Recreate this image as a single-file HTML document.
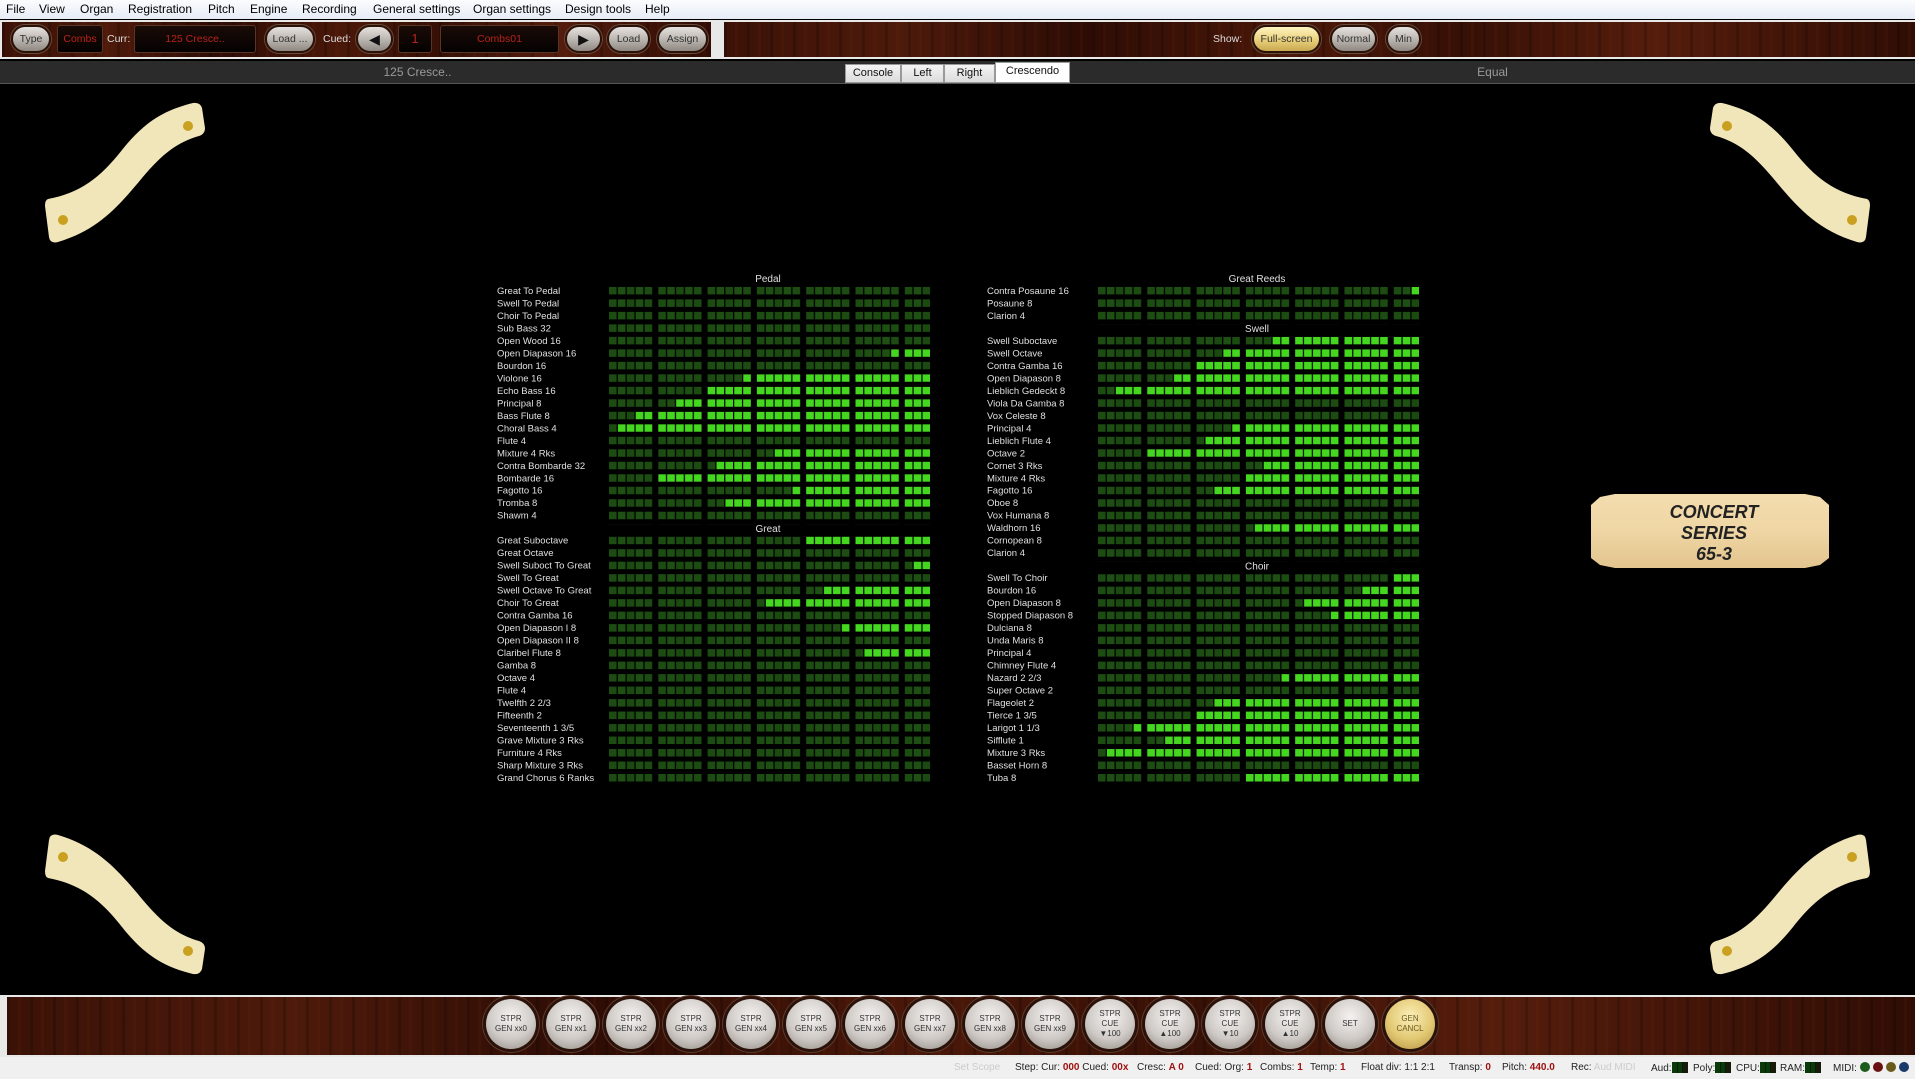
<!DOCTYPE html>
<html><head><meta charset="utf-8">
<style>
*{margin:0;padding:0;box-sizing:border-box}
body{width:1915px;height:1079px;background:#000;position:relative;overflow:hidden;font-family:"Liberation Sans",Arial,sans-serif}
.abs{position:absolute}
#menu{left:0;top:0;width:1915px;height:19px;background:linear-gradient(#fbfcfe,#e6ecf6);font-size:12px;color:#000}
#menu span{position:absolute;top:2px}
.wood{background:
 repeating-linear-gradient(90deg,rgba(0,0,0,.18) 0 3px,rgba(0,0,0,0) 3px 11px,rgba(120,40,10,.12) 11px 14px,rgba(0,0,0,0) 14px 23px),
 linear-gradient(90deg,#3b1207,#4d1a0b 15%,#2d0c05 30%,#4a1809 48%,#361006 62%,#551d0c 78%,#2f0d05)}
#tb{left:0;top:20px;width:1915px;height:39px;background:#e8e8e8}
.btn{position:absolute;height:28px;border-radius:14px;background:linear-gradient(#e6e2df,#b9b3ae 55%,#8f8781);border:2px solid #2a1208;box-shadow:0 0 0 1px #6b4a3a;font-size:10.5px;color:#333;text-align:center;line-height:24px}
.disp{position:absolute;height:28px;background:linear-gradient(#1a0b07,#050202);border:1px solid #5a3424;border-radius:3px;color:#b8231b;font-size:10.5px;text-align:center;line-height:26px}
.lbl{position:absolute;color:#ddd;font-size:10.5px}
#tabs{left:0;top:61px;width:1915px;height:23px;background:#2b2b2b;border-bottom:1px solid #555}
.tab{position:absolute;top:3px;height:19px;background:linear-gradient(#f4f4f4,#dcdcdc);border:1px solid #999;font-size:11px;color:#111;text-align:center;line-height:17px}
#bot{left:0;top:995px;width:1915px;height:62px;background:#e8e8e8}
.cb{position:absolute;top:4px;width:50px;height:50px;border-radius:50%;background:radial-gradient(circle at 50% 35%,#f4f2f0,#cfcac6 55%,#8e8781);box-shadow:0 0 0 3px #2a120a,0 0 0 4px #5e3a2a;font-size:8px;color:#333;text-align:center;display:flex;align-items:center;justify-content:center;line-height:10px}
#status{left:0;top:1057px;width:1915px;height:22px;background:#f0f0f0;font-size:10px;color:#222}
#status span{position:absolute;top:5px;white-space:nowrap}
.r{color:#a01010}
.meter{display:inline-block;width:16px;height:11px;vertical-align:-2px;background:linear-gradient(90deg,#0a3a0a 0 30%,#000 30% 35%,#0a3a0a 35% 65%,#000 65% 70%,#1a1a0a 70%)}
.dot{display:inline-block;width:10px;height:10px;border-radius:50%;vertical-align:-1px;margin-left:3px}
</style></head><body>

<div id="menu" class="abs">
<span style="left:6px">File</span><span style="left:39px">View</span><span style="left:80px">Organ</span><span style="left:128px">Registration</span><span style="left:208px">Pitch</span><span style="left:250px">Engine</span><span style="left:302px">Recording</span><span style="left:373px">General settings</span><span style="left:473px">Organ settings</span><span style="left:565px">Design tools</span><span style="left:645px">Help</span>
</div>

<div id="tb" class="abs">
 <div class="abs wood" style="left:2px;top:2px;width:709px;height:35px"></div>
 <div class="abs wood" style="left:724px;top:2px;width:1191px;height:35px"></div>
 <div class="btn" style="left:11px;top:5px;width:40px">Type</div>
 <div class="disp" style="left:57px;top:5px;width:46px">Combs</div>
 <div class="lbl" style="left:107px;top:13px">Curr:</div>
 <div class="disp" style="left:134px;top:5px;width:122px">125 Cresce..</div>
 <div class="btn" style="left:265px;top:5px;width:50px">Load ...</div>
 <div class="lbl" style="left:323px;top:13px">Cued:</div>
 <div class="btn" style="left:356px;top:5px;width:37px;font-size:14px;color:#111">&#9664;</div>
 <div class="disp" style="left:398px;top:5px;width:34px;font-size:13px">1</div>
 <div class="disp" style="left:440px;top:5px;width:119px">Combs01</div>
 <div class="btn" style="left:565px;top:5px;width:37px;font-size:14px;color:#111">&#9654;</div>
 <div class="btn" style="left:607px;top:5px;width:43px">Load</div>
 <div class="btn" style="left:657px;top:5px;width:51px">Assign</div>
 <div class="lbl" style="left:1213px;top:13px">Show:</div>
 <div class="btn" style="left:1252px;top:5px;width:69px;background:linear-gradient(#fff4c0,#e8cf7a 55%,#c9a850)">Full-screen</div>
 <div class="btn" style="left:1330px;top:5px;width:47px">Normal</div>
 <div class="btn" style="left:1386px;top:5px;width:35px">Min</div>
</div>

<div id="tabs" class="abs">
 <div class="abs" style="left:0;width:835px;top:4px;text-align:center;color:#9a9a9a;font-size:12px">125 Cresce..</div>
 <div class="abs" style="left:1070px;width:845px;top:4px;text-align:center;color:#9a9a9a;font-size:12px">Equal</div>
 <div class="tab" style="left:845px;width:56px">Console</div>
 <div class="tab" style="left:901px;width:43px">Left</div>
 <div class="tab" style="left:944px;width:51px">Right</div>
 <div class="tab" style="left:995px;width:75px;background:#fff;top:1px;height:21px">Crescendo</div>
</div>

<svg class="abs" style="left:0;top:0" width="1915" height="1079" viewBox="0 0 1915 1079">
<defs>
 <pattern id="un" patternUnits="userSpaceOnUse" x="609" y="286.9" width="49.3" height="12.49">
  <rect x="0" y="0" width="7.6" height="7.5" fill="#1c4c12"/><rect x="8.9" y="0" width="7.6" height="7.5" fill="#1e5013"/><rect x="17.8" y="0" width="7.6" height="7.5" fill="#1b4a11"/><rect x="26.7" y="0" width="7.6" height="7.5" fill="#1e5013"/><rect x="35.6" y="0" width="7.6" height="7.5" fill="#1c4c12"/>
 </pattern>
 <pattern id="lit" patternUnits="userSpaceOnUse" x="609" y="286.9" width="49.3" height="12.49">
  <rect x="0" y="0" width="7.6" height="7.5" fill="#45d620"/><rect x="8.9" y="0" width="7.6" height="7.5" fill="#45d620"/><rect x="17.8" y="0" width="7.6" height="7.5" fill="#45d620"/><rect x="26.7" y="0" width="7.6" height="7.5" fill="#45d620"/><rect x="35.6" y="0" width="7.6" height="7.5" fill="#45d620"/>
 </pattern>
 <linearGradient id="pl" x1="0" y1="0" x2="0" y2="1"><stop offset="0" stop-color="#f3dcae"/><stop offset="0.5" stop-color="#efd6a4"/><stop offset="1" stop-color="#e2c48e"/></linearGradient>
 <g id="corner">
  <path d="M48,199 C80,193 100,178 122,150 C145,121 165,110 193,103 Q200,102 202,108 L205,128 Q205,134 199,136 C178,142 163,153 142,178 C118,207 98,230 58,242 Q50,244 49,237 L45,206 Q45,200 48,199 Z" fill="#f1e6ba"/>
  <circle cx="63" cy="220" r="5" fill="#c9a020"/><circle cx="188" cy="126" r="5" fill="#c9a020"/>
 </g>
</defs>
<use href="#corner"/>
<use href="#corner" transform="translate(1915,0) scale(-1,1)"/>
<use href="#corner" transform="translate(0,1077) scale(1,-1)"/>
<use href="#corner" transform="translate(1915,1077) scale(-1,-1)"/>

<path d="M1600,497 L1615,494 L1805,494 L1820,497 L1829,505 L1829,558 L1820,565 L1805,568 L1615,568 L1600,565 L1591,558 L1591,505 Z" fill="url(#pl)"/>
<g font-family="Liberation Sans,Arial,sans-serif" font-weight="bold" font-style="italic" font-size="18" fill="#222" text-anchor="middle">
<text x="1714" y="518">CONCERT</text><text x="1714" y="539">SERIES</text><text x="1714" y="560">65-3</text>
</g>

<g font-family="Liberation Sans,Arial,sans-serif" font-size="9.5" fill="#e0e0e0">
<rect x="609" y="286.9" width="321" height="237.31" fill="url(#un)"/>
<rect x="609" y="536.7" width="321" height="249.8" fill="url(#un)"/>
<rect x="891.1" y="349.35" width="38.9" height="7.5" fill="url(#lit)"/>
<rect x="743.2" y="374.33" width="186.8" height="7.5" fill="url(#lit)"/>
<rect x="707.6" y="386.82" width="222.4" height="7.5" fill="url(#lit)"/>
<rect x="676.1" y="399.31" width="253.9" height="7.5" fill="url(#lit)"/>
<rect x="635.7" y="411.8" width="294.3" height="7.5" fill="url(#lit)"/>
<rect x="617.9" y="424.29" width="312.1" height="7.5" fill="url(#lit)"/>
<rect x="774.7" y="449.27" width="155.3" height="7.5" fill="url(#lit)"/>
<rect x="716.5" y="461.76" width="213.5" height="7.5" fill="url(#lit)"/>
<rect x="658.3" y="474.25" width="271.7" height="7.5" fill="url(#lit)"/>
<rect x="792.5" y="486.74" width="137.5" height="7.5" fill="url(#lit)"/>
<rect x="725.4" y="499.23" width="204.6" height="7.5" fill="url(#lit)"/>
<rect x="806.2" y="536.7" width="123.8" height="7.5" fill="url(#lit)"/>
<rect x="913.7" y="561.68" width="16.3" height="7.5" fill="url(#lit)"/>
<rect x="824" y="586.66" width="106" height="7.5" fill="url(#lit)"/>
<rect x="765.8" y="599.15" width="164.2" height="7.5" fill="url(#lit)"/>
<rect x="841.8" y="624.13" width="88.2" height="7.5" fill="url(#lit)"/>
<rect x="864.4" y="649.11" width="65.6" height="7.5" fill="url(#lit)"/>
<text x="768" y="282" text-anchor="middle" font-size="10">Pedal</text>
<text x="768" y="532" text-anchor="middle" font-size="10">Great</text>
<text x="497" y="294">Great To Pedal</text>
<text x="497" y="306.4">Swell To Pedal</text>
<text x="497" y="318.9">Choir To Pedal</text>
<text x="497" y="331.4">Sub Bass 32</text>
<text x="497" y="343.9">Open Wood 16</text>
<text x="497" y="356.4">Open Diapason 16</text>
<text x="497" y="368.8">Bourdon 16</text>
<text x="497" y="381.3">Violone 16</text>
<text x="497" y="393.8">Echo Bass 16</text>
<text x="497" y="406.3">Principal 8</text>
<text x="497" y="418.8">Bass Flute 8</text>
<text x="497" y="431.3">Choral Bass 4</text>
<text x="497" y="443.8">Flute 4</text>
<text x="497" y="456.3">Mixture 4 Rks</text>
<text x="497" y="468.8">Contra Bombarde 32</text>
<text x="497" y="481.3">Bombarde 16</text>
<text x="497" y="493.7">Fagotto 16</text>
<text x="497" y="506.2">Tromba 8</text>
<text x="497" y="518.7">Shawm 4</text>
<text x="497" y="543.7">Great Suboctave</text>
<text x="497" y="556.2">Great Octave</text>
<text x="497" y="568.7">Swell Suboct To Great</text>
<text x="497" y="581.2">Swell To Great</text>
<text x="497" y="593.7">Swell Octave To Great</text>
<text x="497" y="606.2">Choir To Great</text>
<text x="497" y="618.6">Contra Gamba 16</text>
<text x="497" y="631.1">Open Diapason I 8</text>
<text x="497" y="643.6">Open Diapason II 8</text>
<text x="497" y="656.1">Claribel Flute 8</text>
<text x="497" y="668.6">Gamba 8</text>
<text x="497" y="681.1">Octave 4</text>
<text x="497" y="693.6">Flute 4</text>
<text x="497" y="706.1">Twelfth 2 2/3</text>
<text x="497" y="718.6">Fifteenth 2</text>
<text x="497" y="731">Seventeenth 1 3/5</text>
<text x="497" y="743.5">Grave Mixture 3 Rks</text>
<text x="497" y="756">Furniture 4 Rks</text>
<text x="497" y="768.5">Sharp Mixture 3 Rks</text>
<text x="497" y="781">Grand Chorus 6 Ranks</text>

<g transform="translate(489,0)">
<rect x="609" y="286.9" width="321" height="37.47" fill="url(#un)"/>
<rect x="609" y="336.86" width="321" height="224.82" fill="url(#un)"/>
<rect x="609" y="574.17" width="321" height="212.33" fill="url(#un)"/>
<rect x="922.6" y="286.9" width="7.4" height="7.5" fill="url(#lit)"/>
<rect x="783.6" y="336.86" width="146.4" height="7.5" fill="url(#lit)"/>
<rect x="734.3" y="349.35" width="195.7" height="7.5" fill="url(#lit)"/>
<rect x="707.6" y="361.84" width="222.4" height="7.5" fill="url(#lit)"/>
<rect x="685" y="374.33" width="245" height="7.5" fill="url(#lit)"/>
<rect x="626.8" y="386.82" width="303.2" height="7.5" fill="url(#lit)"/>
<rect x="743.2" y="424.29" width="186.8" height="7.5" fill="url(#lit)"/>
<rect x="716.5" y="436.78" width="213.5" height="7.5" fill="url(#lit)"/>
<rect x="658.3" y="449.27" width="271.7" height="7.5" fill="url(#lit)"/>
<rect x="774.7" y="461.76" width="155.3" height="7.5" fill="url(#lit)"/>
<rect x="756.9" y="474.25" width="173.1" height="7.5" fill="url(#lit)"/>
<rect x="725.4" y="486.74" width="204.6" height="7.5" fill="url(#lit)"/>
<rect x="765.8" y="524.21" width="164.2" height="7.5" fill="url(#lit)"/>
<rect x="904.8" y="574.17" width="25.2" height="7.5" fill="url(#lit)"/>
<rect x="873.3" y="586.66" width="56.7" height="7.5" fill="url(#lit)"/>
<rect x="815.1" y="599.15" width="114.9" height="7.5" fill="url(#lit)"/>
<rect x="841.8" y="611.64" width="88.2" height="7.5" fill="url(#lit)"/>
<rect x="792.5" y="674.09" width="137.5" height="7.5" fill="url(#lit)"/>
<rect x="725.4" y="699.07" width="204.6" height="7.5" fill="url(#lit)"/>
<rect x="707.6" y="711.56" width="222.4" height="7.5" fill="url(#lit)"/>
<rect x="644.6" y="724.05" width="285.4" height="7.5" fill="url(#lit)"/>
<rect x="676.1" y="736.54" width="253.9" height="7.5" fill="url(#lit)"/>
<rect x="617.9" y="749.03" width="312.1" height="7.5" fill="url(#lit)"/>
<rect x="756.9" y="774.01" width="173.1" height="7.5" fill="url(#lit)"/>
<text x="768" y="282" text-anchor="middle" font-size="10">Great Reeds</text>
<text x="768" y="332" text-anchor="middle" font-size="10">Swell</text>
<text x="768" y="569.5" text-anchor="middle" font-size="10">Choir</text>
<text x="498" y="294">Contra Posaune 16</text>
<text x="498" y="306.4">Posaune 8</text>
<text x="498" y="318.9">Clarion 4</text>
<text x="498" y="343.9">Swell Suboctave</text>
<text x="498" y="356.4">Swell Octave</text>
<text x="498" y="368.8">Contra Gamba 16</text>
<text x="498" y="381.3">Open Diapason 8</text>
<text x="498" y="393.8">Lieblich Gedeckt 8</text>
<text x="498" y="406.3">Viola Da Gamba 8</text>
<text x="498" y="418.8">Vox Celeste 8</text>
<text x="498" y="431.3">Principal 4</text>
<text x="498" y="443.8">Lieblich Flute 4</text>
<text x="498" y="456.3">Octave 2</text>
<text x="498" y="468.8">Cornet 3 Rks</text>
<text x="498" y="481.3">Mixture 4 Rks</text>
<text x="498" y="493.7">Fagotto 16</text>
<text x="498" y="506.2">Oboe 8</text>
<text x="498" y="518.7">Vox Humana 8</text>
<text x="498" y="531.2">Waldhorn 16</text>
<text x="498" y="543.7">Cornopean 8</text>
<text x="498" y="556.2">Clarion 4</text>
<text x="498" y="581.2">Swell To Choir</text>
<text x="498" y="593.7">Bourdon 16</text>
<text x="498" y="606.2">Open Diapason 8</text>
<text x="498" y="618.6">Stopped Diapason 8</text>
<text x="498" y="631.1">Dulciana 8</text>
<text x="498" y="643.6">Unda Maris 8</text>
<text x="498" y="656.1">Principal 4</text>
<text x="498" y="668.6">Chimney Flute 4</text>
<text x="498" y="681.1">Nazard 2 2/3</text>
<text x="498" y="693.6">Super Octave 2</text>
<text x="498" y="706.1">Flageolet 2</text>
<text x="498" y="718.6">Tierce 1 3/5</text>
<text x="498" y="731">Larigot 1 1/3</text>
<text x="498" y="743.5">Sifflute 1</text>
<text x="498" y="756">Mixture 3 Rks</text>
<text x="498" y="768.5">Basset Horn 8</text>
<text x="498" y="781">Tuba 8</text>
</g>
</g>
</svg>

<div id="bot" class="abs">
 <div class="abs wood" style="left:7px;top:2px;width:1908px;height:58px"></div>
 <div class="cb" style="left:486px">STPR<br>GEN xx0</div>
 <div class="cb" style="left:546px">STPR<br>GEN xx1</div>
 <div class="cb" style="left:606px">STPR<br>GEN xx2</div>
 <div class="cb" style="left:666px">STPR<br>GEN xx3</div>
 <div class="cb" style="left:726px">STPR<br>GEN xx4</div>
 <div class="cb" style="left:786px">STPR<br>GEN xx5</div>
 <div class="cb" style="left:845px">STPR<br>GEN xx6</div>
 <div class="cb" style="left:905px">STPR<br>GEN xx7</div>
 <div class="cb" style="left:965px">STPR<br>GEN xx8</div>
 <div class="cb" style="left:1025px">STPR<br>GEN xx9</div>
 <div class="cb" style="left:1085px">STPR<br>CUE<br>&#9660;100</div>
 <div class="cb" style="left:1145px">STPR<br>CUE<br>&#9650;100</div>
 <div class="cb" style="left:1205px">STPR<br>CUE<br>&#9660;10</div>
 <div class="cb" style="left:1265px">STPR<br>CUE<br>&#9650;10</div>
 <div class="cb" style="left:1325px">SET</div>
 <div class="cb" style="left:1385px;background:radial-gradient(circle at 50% 35%,#fbefb8,#e2c873 55%,#b1903f);color:#6b5a20">GEN<br>CANCL</div>
</div>

<div id="status" class="abs">
 <span style="left:954px;color:#ccc">Set Scope</span>
 <span style="left:1015px">Step: Cur: <b class="r">000</b> Cued: <b class="r">00x</b></span>
 <span style="left:1137px">Cresc: <b class="r">A 0</b></span>
 <span style="left:1195px">Cued: Org: <b class="r">1</b></span>
 <span style="left:1260px">Combs: <b class="r">1</b></span>
 <span style="left:1310px">Temp: <b class="r">1</b></span>
 <span style="left:1361px">Float div: 1:1 2:1</span>
 <span style="left:1449px">Transp: <b class="r">0</b></span>
 <span style="left:1502px">Pitch: <b class="r">440.0</b></span>
 <span style="left:1571px">Rec: <span style="color:#ccc;position:static">Aud MIDI</span></span>
 <span style="left:1651px">Aud:<i class="meter"></i></span>
 <span style="left:1693px">Poly:<i class="meter"></i></span>
 <span style="left:1736px">CPU:<i class="meter"></i></span>
 <span style="left:1780px">RAM:<i class="meter"></i></span>
 <span style="left:1833px">MIDI:<i class="dot" style="background:#1d5a1d"></i><i class="dot" style="background:#6a1010"></i><i class="dot" style="background:#6a5a1a"></i><i class="dot" style="background:#1a3a6a"></i></span>
</div>
</body></html>
